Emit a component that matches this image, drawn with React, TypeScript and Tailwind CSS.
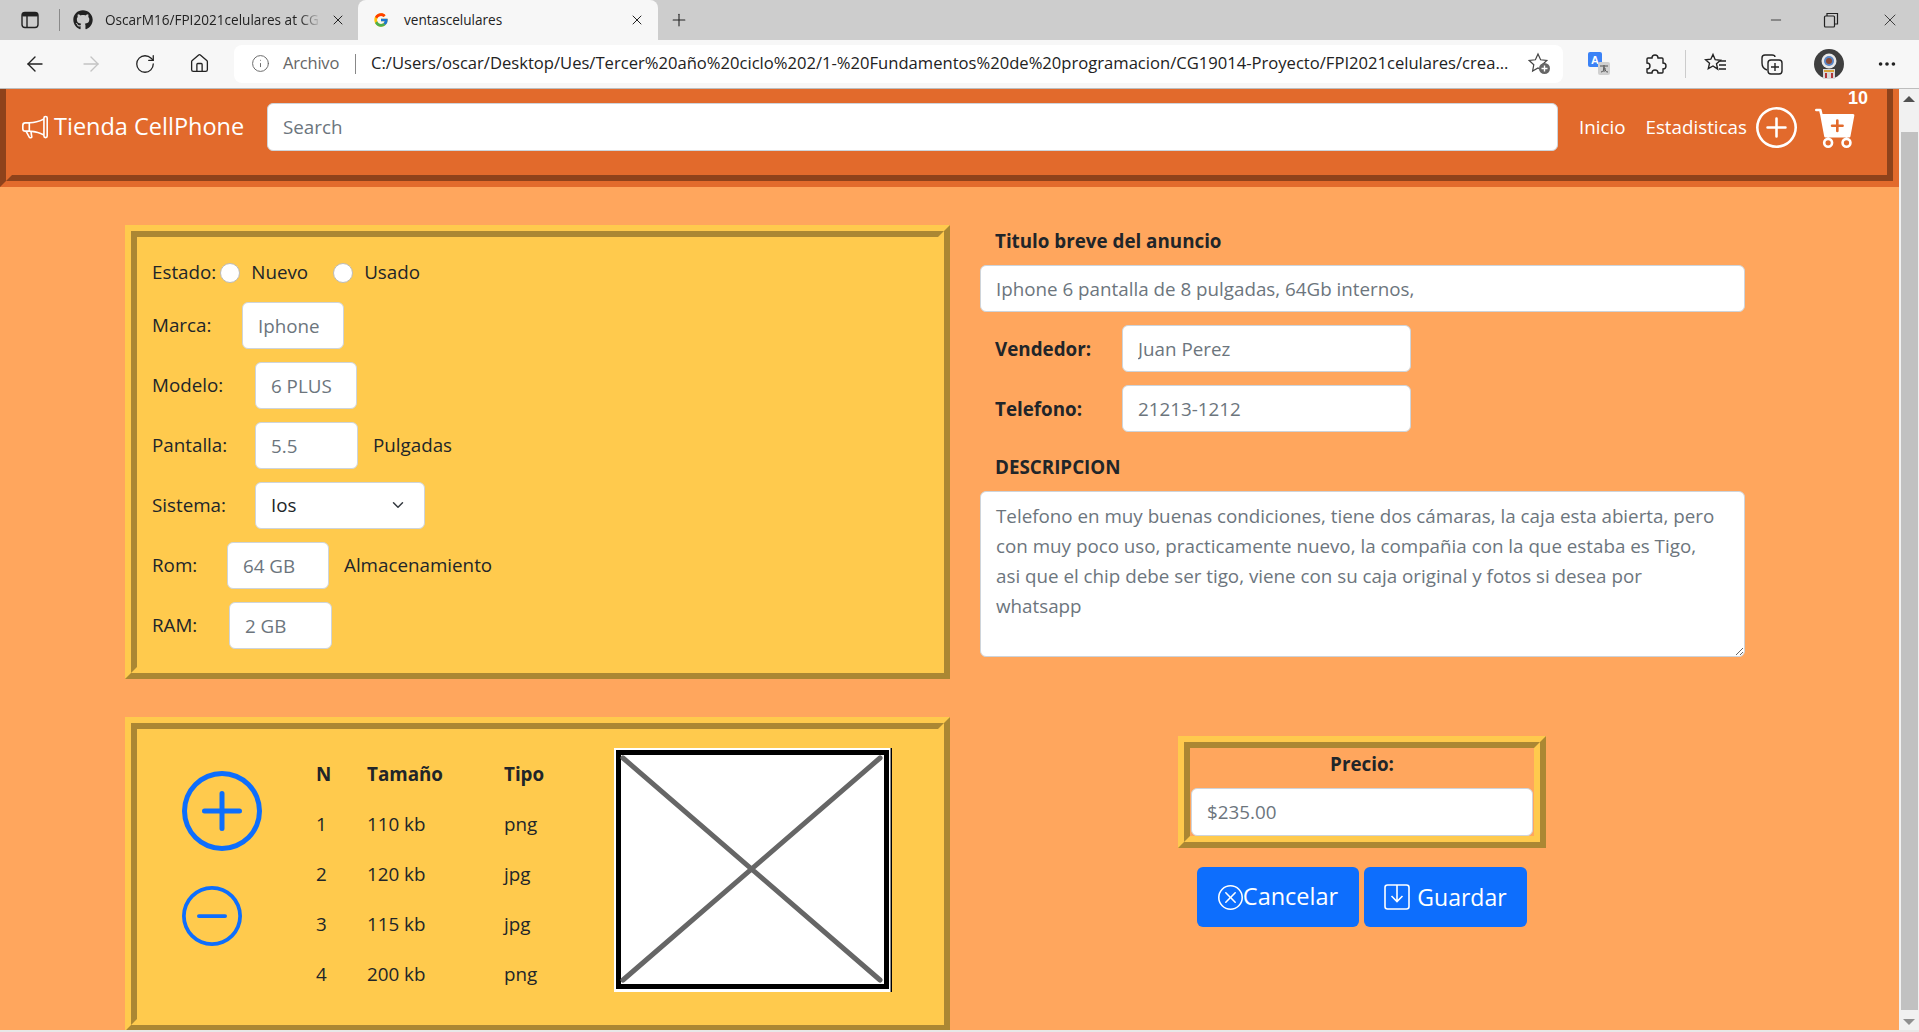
import React from 'react';
import { ArrowLeft, ArrowRight, RotateCw, Home, Info, Plus, X, Minus, ChevronDown, Ellipsis } from 'lucide-react';
import { BsCartPlusFill, BsDashCircle, BsMegaphone, BsPlusCircle, BsXCircle } from 'react-icons/bs';
import { FaGithub } from 'react-icons/fa';
import { FcGoogle } from 'react-icons/fc';

const inputCls =
  'h-[47px] rounded-[6px] border border-[#ced4da] bg-white px-[15px] text-[#212529] placeholder:text-[#6c757d] outline-none';

const filas = [
  { n: 1, size: '110 kb', tipo: 'png' },
  { n: 2, size: '120 kb', tipo: 'jpg' },
  { n: 3, size: '115 kb', tipo: 'jpg' },
  { n: 4, size: '200 kb', tipo: 'png' },
];

const BrowserChrome = () => (
  <div className="font-['Open_Sans',sans-serif] text-[#222]">
    <div className="flex h-10 items-center bg-[#cdcdcd] text-[13.6px]">
      <svg width="18" height="18" viewBox="0 0 18 18" fill="none" stroke="#222" strokeWidth="1.4" className="ml-[21px]">
        <rect x="1" y="1.5" width="16" height="15" rx="3" />
        <path d="M1.5 4.5h15M6 5v11" />
        <path d="M2 2.5h14v2H2z" fill="#222" />
      </svg>
      <div className="ml-[20px] h-[22px] w-px bg-[#8a8a8a]" />
      <FaGithub size={20} className="ml-[13px] text-[#222]" />
      <span className="ml-[12px] w-[216px] whitespace-nowrap [mask-image:linear-gradient(to_right,black_90%,transparent)]">
        OscarM16/FPI2021celulares at CG
      </span>
      <X size={16} strokeWidth={1.5} className="ml-[9px]" />
      <div className="ml-[12px] flex h-10 w-[300px] items-center rounded-t-[8px] bg-[#f7f7f7]">
        <FcGoogle size={16} className="ml-[15px]" />
        <span className="ml-[15px] w-[225px]">ventascelulares</span>
        <X size={16} strokeWidth={1.5} />
      </div>
      <Plus size={20} strokeWidth={1.3} className="ml-[11px]" />
      <div className="flex-1" />
      <Minus size={16} strokeWidth={1.2} />
      <svg width="16" height="16" viewBox="0 0 16 16" fill="none" stroke="#222" strokeWidth="1.2" className="ml-[39px]">
        <rect x="1.5" y="4" width="10" height="11" rx="1" />
        <path d="M4 4V1.5h10.5V12H11.5" />
      </svg>
      <X size={20} strokeWidth={1} className="ml-[41px] mr-[19px]" />
    </div>
    <div className="flex h-[49px] items-center border-b border-[#bdbdbd] bg-[#f7f7f7] pb-px">
      <ArrowLeft size={24} strokeWidth={1.4} className="ml-[23px]" />
      <ArrowRight size={24} strokeWidth={1.4} className="ml-[32px] text-[#c4c4c4]" />
      <RotateCw size={22} strokeWidth={1.4} className="ml-[31px]" />
      <Home size={21} strokeWidth={1.5} className="ml-[33px]" />
      <div className="ml-[24px] flex h-[38px] w-[1329px] items-center rounded-[8px] bg-white">
        <Info size={19} strokeWidth={1.2} className="ml-[17px] text-[#666]" />
        <span className="ml-[13px] w-[58px] text-[16.5px] tracking-[-0.2px] text-[#666]">Archivo</span>
        <div className="ml-[14px] h-[20px] w-px bg-[#888]" />
        <span className="ml-[15px] w-[1140px] text-[16.6px] whitespace-nowrap">
          C:/Users/oscar/Desktop/Ues/Tercer%20año%20ciclo%202/1-%20Fundamentos%20de%20programacion/CG19014-Proyecto/FPI2021celulares/crea...
        </span>
        <svg width="23" height="23" viewBox="0 0 23 23" fill="none" stroke="#444" strokeWidth="1.2" className="ml-[17px]">
          <path d="M10 2l2.6 5.8 6.2.7-4.6 4.2 1.2 6.2L10 16l-5.4 3-0 0 1.2-6.3L1.2 8.5l6.2-.7z" />
          <circle cx="16.5" cy="16.5" r="5.5" fill="#666" stroke="none" />
          <path d="M16.5 13.5v6M13.5 16.5h6" stroke="#fff" strokeWidth="1.4" />
        </svg>
      </div>
      <svg width="22" height="24" viewBox="0 0 22 24" className="ml-[25px]">
        <rect x="0" y="0" width="14" height="15" rx="2" fill="#3b82f6" />
        <text x="3" y="12" fontSize="11" fontWeight="700" fill="#fff" fontFamily="'Liberation Sans',sans-serif">A</text>
        <rect x="10" y="10" width="12" height="13" rx="2" fill="#d0d0d0" />
        <path d="M12 14h8M16 13v7M13 20c2 0 3-2 3-5M17 16c0 3 1 4 3 4" stroke="#555" strokeWidth="1" fill="none" />
      </svg>
      <svg width="24" height="24" viewBox="0 0 24 24" fill="none" stroke="#222" strokeWidth="1.4" className="ml-[33px]">
        <path d="M5 6h4a3 3 0 0 1 6 0h4a1 1 0 0 1 1 1v4a3 3 0 0 1 0 6v3a1 1 0 0 1-1 1h-4a3 3 0 0 0-6 0H5a1 1 0 0 1-1-1v-3a3 3 0 0 0 0-6V7a1 1 0 0 1 1-1z" />
      </svg>
      <div className="ml-[18px] h-[28px] w-px bg-[#ccc]" />
      <svg width="24" height="24" viewBox="0 0 24 24" fill="none" stroke="#222" strokeWidth="1.4" className="ml-[18px]">
        <path d="M9 2.5l2.2 5.2 5.3.5-4 3.6 1.2 5.4L9 14l-4.700 2.700 1.200-5.400-4-3.600 5.300-.500z" />
        <path d="M16 9h6M15 13h7M15 17h7" />
      </svg>
      <svg width="24" height="24" viewBox="0 0 24 24" fill="none" stroke="#222" strokeWidth="1.4" className="ml-[32px]">
        <path d="M7 18C4 17 2 14 2 11V6c0-2 1-3 3-3h7c2 0 3 1 3 2" />
        <rect x="8" y="8" width="14" height="14" rx="3" />
        <path d="M15 11v8M11 15h8" />
      </svg>
      <svg width="30" height="30" viewBox="0 0 30 30" className="ml-[30px]">
        <circle cx="15" cy="15" r="15" fill="#3f3f3f" />
        <rect x="9" y="20" width="12" height="10" fill="#d8d8d8" />
        <rect x="10" y="21" width="10" height="2" fill="#d9a23b" />
        <rect x="11" y="24" width="2" height="5" fill="#b3363a" />
        <rect x="17" y="24" width="2" height="5" fill="#b3363a" />
        <circle cx="15" cy="12" r="7.500" fill="#e8e8e8" />
        <circle cx="15" cy="12" r="5" fill="#5b86c4" />
        <circle cx="15" cy="12" r="3" fill="#8a4a36" />
      </svg>
      <Ellipsis size={22} className="ml-[32px]" />
    </div>
  </div>
);

const Navbar = () => (
  <nav className="relative -mt-[12px] flex h-[110px] w-full items-center border-[12px] border-[#e26a2c] bg-[#e26a2c] pr-[30px] pb-[10px] pl-[10px] text-white [border-style:groove]">
    <BsMegaphone size={26} />
    <span className="ml-[6px] w-[192px] text-[23.5px] whitespace-nowrap">Tienda CellPhone</span>
    <input placeholder="Search" className={`${inputCls} ml-[21px] h-[48px] flex-1 placeholder:text-[#6c757d]`} />
    <span className="ml-[21px] whitespace-nowrap">Inicio</span>
    <span className="ml-[20px] whitespace-nowrap">Estadisticas</span>
    <BsPlusCircle size={41} className="ml-[9px]" />
    <BsCartPlusFill size={42} className="ml-[18px]" />
    <span className="absolute top-0 right-[19px] font-['Liberation_Sans',sans-serif] text-[18px] leading-none font-bold">10</span>
  </nav>
);

const FormRow = ({ label, w, value, inputW, after }: { label: string; w: string; value: string; inputW: string; after?: string }) => (
  <div className="flex items-center">
    <span className={w}>{label}</span>
    <input placeholder={value} className={`${inputCls} ${inputW}`} />
    {after && <span className="ml-[15px]">{after}</span>}
  </div>
);

const DatosPanel = () => (
  <section className="flex h-[454px] flex-col gap-[13px] border-[12px] border-[#ffca4d] bg-[#ffca4d] pt-[19px] pl-[15px] text-[#212529] [border-style:ridge]">
    <div className="flex h-[33px] items-center">
      <span>Estado:</span>
      <input type="radio" name="estado" className="ml-[4px] h-5 w-5 appearance-none rounded-full border border-[#bbb] bg-white" />
      <span className="ml-[11px]">Nuevo</span>
      <input type="radio" name="estado" className="ml-[25px] h-5 w-5 appearance-none rounded-full border border-[#bbb] bg-white" />
      <span className="ml-[11px]">Usado</span>
    </div>
    <FormRow label="Marca:" w="w-[90px]" value="Iphone" inputW="w-[102px]" />
    <FormRow label="Modelo:" w="w-[103px]" value="6 PLUS" inputW="w-[102px]" />
    <FormRow label="Pantalla:" w="w-[103px]" value="5.5" inputW="w-[103px]" after="Pulgadas" />
    <div className="flex items-center">
      <span className="w-[103px]">Sistema:</span>
      <div className="relative">
        <select className={`${inputCls} w-[170px] appearance-none`}>
          <option>Ios</option>
        </select>
        <ChevronDown size={18} strokeWidth={2} className="pointer-events-none absolute top-[14px] right-[18px] text-[#343a40]" />
      </div>
    </div>
    <FormRow label="Rom:" w="w-[75px]" value="64 GB" inputW="w-[102px]" after="Almacenamiento" />
    <FormRow label="RAM:" w="w-[77px]" value="2 GB" inputW="w-[103px]" />
  </section>
);

const ImagenesPanel = () => (
  <section className="flex h-[314px] items-start border-[12px] border-[#ffca4d] bg-[#ffca4d] pt-[19px] pl-[45px] text-[#212529] [border-style:ridge]">
    <div className="flex w-[134px] flex-col items-start pt-[23px] text-[#0d6efd]">
      <BsPlusCircle size={80} />
      <BsDashCircle size={60} className="mt-[35px]" />
    </div>
    <table className="mt-px w-[298px] table-fixed text-left">
      <colgroup>
        <col className="w-[51px]" />
        <col className="w-[137px]" />
        <col className="w-[110px]" />
      </colgroup>
      <thead>
        <tr className="h-[50px] font-bold">
          <th>N</th>
          <th>Tamaño</th>
          <th>Tipo</th>
        </tr>
      </thead>
      <tbody>
        {filas.map((f) => (
          <tr key={f.n} className="h-[50px]">
            <td>{f.n}</td>
            <td>{f.size}</td>
            <td>{f.tipo}</td>
          </tr>
        ))}
      </tbody>
    </table>
    <svg width="278" height="244" viewBox="0 0 278 244">
      <rect width="277" height="244" fill="#fff" />
      <rect x="4.500" y="4.500" width="268" height="234" fill="#fff" stroke="#000" strokeWidth="5" />
      <path d="M9 10L266 232M266 10L9 232" stroke="#666" strokeWidth="5" strokeLinecap="round" />
      <path d="M277.300 0V244" stroke="#000" strokeWidth="1.500" />
    </svg>
  </section>
);

const AnuncioColumn = () => (
  <div className="ml-[30px] flex w-[765px] flex-col pt-px text-[#212529]">
    <label className="h-[30px] pl-[15px] leading-[30px] font-bold">Titulo breve del anuncio</label>
    <input placeholder="Iphone 6 pantalla de 8 pulgadas, 64Gb internos," className={`${inputCls} mt-[9px] w-full`} />
    <div className="mt-[13px] flex items-center pl-[15px]">
      <span className="w-[127px] pt-[2px] font-bold">Vendedor:</span>
      <input placeholder="Juan Perez" className={`${inputCls} w-[289px]`} />
    </div>
    <div className="mt-[13px] flex items-center pl-[15px]">
      <span className="w-[127px] pt-[2px] font-bold">Telefono:</span>
      <input placeholder="21213-1212" className={`${inputCls} w-[289px]`} />
    </div>
    <label className="mt-[20px] h-[30px] pl-[15px] leading-[30px] font-bold">DESCRIPCION</label>
    <textarea
      placeholder={'Telefono en muy buenas condiciones, tiene dos cámaras, la caja esta abierta, pero\ncon muy poco uso, practicamente nuevo, la compañia con la que estaba es Tigo,\nasi que el chip debe ser tigo, viene con su caja original y fotos si desea por\nwhatsapp'}
      className={`${inputCls} mt-[9px] h-[166px] w-full py-[9px] leading-[30px]`}
    />
    <div className="mt-[79px] ml-[198px] flex h-[112px] w-[368px] flex-col border-[12px] border-[#ffca4d] [border-style:ridge]">
      <div className="h-[40px] text-center leading-[32px] font-bold">Precio:</div>
      <input placeholder="$235.00" className={`${inputCls} mx-px h-[48px]`} />
    </div>
    <div className="mt-[19px] flex gap-[5px] pl-[217px]">
      <button className="flex h-[60px] w-[162px] items-center justify-center rounded-[6px] bg-[#0d6efd] text-[23.5px] text-white">
        <BsXCircle size={25} />
        Cancelar
      </button>
      <button className="flex h-[60px] w-[163px] items-center justify-center gap-[7px] rounded-[6px] bg-[#0d6efd] text-[23px] text-white">
        <svg width="26" height="26" viewBox="0 0 26 26" fill="none" stroke="currentColor" strokeWidth="1.6">
          <rect x="1" y="1" width="24" height="24" rx="2.500" />
          <path d="M13 1v16M7.500 12l5.500 5.500 5.500-5.500" />
        </svg>
        Guardar
      </button>
    </div>
  </div>
);

const Scrollbar = () => (
  <div className="flex w-[20px] flex-col items-center bg-[#f1f1f1]">
    <div className="mt-[7px] h-0 w-0 border-x-[6px] border-b-[6px] border-x-transparent border-b-[#505050]" />
    <div className="mt-[30px] h-[878px] w-[17px] bg-[#c1c1c1]" />
    <div className="mt-[9px] h-0 w-0 border-x-[6px] border-t-[6px] border-x-transparent border-t-[#909090]" />
  </div>
);

export default function App() {
  return (
    <div className="flex h-[1032px] w-full flex-col overflow-hidden bg-[#e8e8e8]">
      <BrowserChrome />
      <div className="flex h-[941px] min-h-0">
        <main className="min-w-0 flex-1 overflow-hidden bg-[#ffa65d] font-['Open_Sans',sans-serif] text-[18.8px]">
          <Navbar />
          <div className="flex pt-[38px] pl-[125px]">
            <div className="flex w-[825px] flex-col gap-[38px]">
              <DatosPanel />
              <ImagenesPanel />
            </div>
            <AnuncioColumn />
          </div>
        </main>
        <Scrollbar />
      </div>
    </div>
  );
}
